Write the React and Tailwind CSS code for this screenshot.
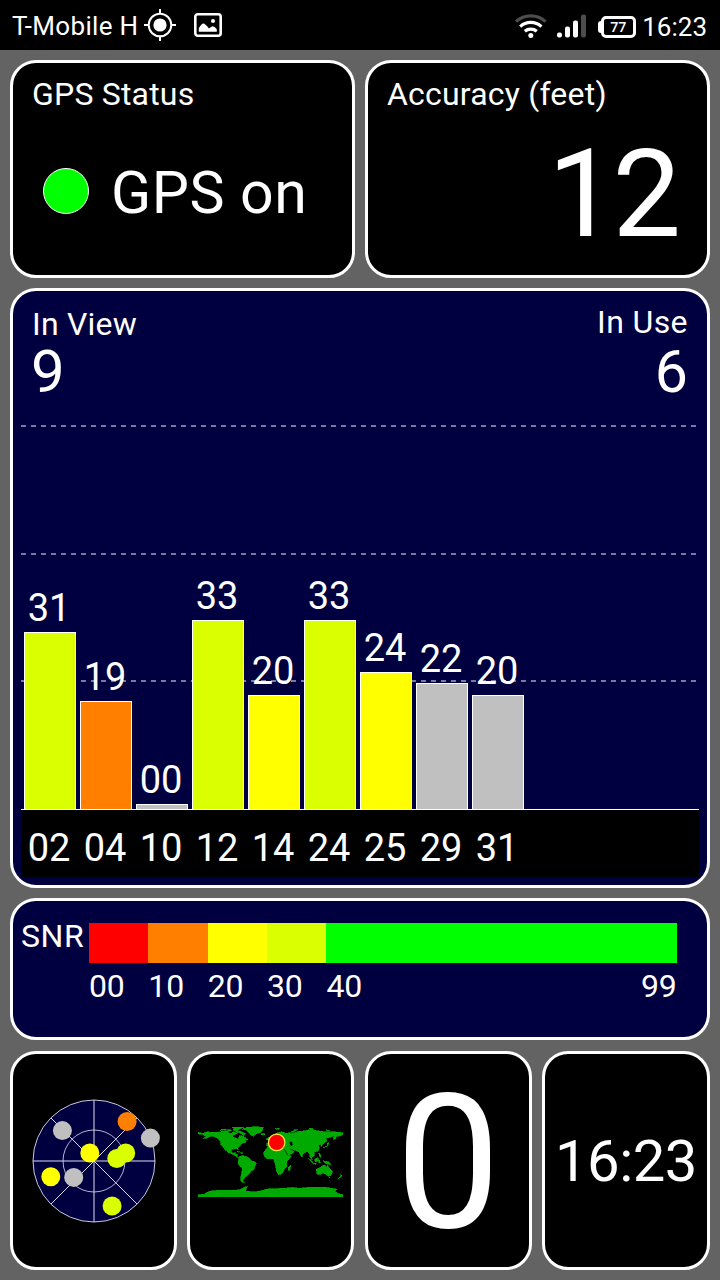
import React from 'react';
import clsx from 'clsx';

const satellites = [
    { id: '02', snr: '31', height: 177, color: 'bg-[#d9ff00]' },
    { id: '04', snr: '19', height: 108, color: 'bg-[#ff8000]' },
    { id: '10', snr: '00', height: 5, color: 'bg-[#c0c0c0]' },
    { id: '12', snr: '33', height: 189, color: 'bg-[#d9ff00]' },
    { id: '14', snr: '20', height: 114, color: 'bg-[#ffff00]' },
    { id: '24', snr: '33', height: 189, color: 'bg-[#d9ff00]' },
    { id: '25', snr: '24', height: 137, color: 'bg-[#ffff00]' },
    { id: '29', snr: '22', height: 126, color: 'bg-[#c0c0c0]' },
    { id: '31', snr: '20', height: 114, color: 'bg-[#c0c0c0]' },
];

const snrScale = [
    { from: '00', span: 10, color: 'bg-[#ff0000]' },
    { from: '10', span: 10, color: 'bg-[#ff8000]' },
    { from: '20', span: 10, color: 'bg-[#ffff00]' },
    { from: '30', span: 10, color: 'bg-[#d9ff00]' },
    { from: '40', to: '99', span: 59, color: 'bg-[#00ff00]' },
];

// Offsets from the centre of the sky plot
const skyDots = [
    { x: 33.1, y: -39.5, fill: '#ff8000' },
    { x: 56.4, y: -22.9, fill: '#c0c0c0' },
    { x: 31.7, y: -8, fill: '#d9ff00' },
    { x: 22.8, y: -2.5, fill: '#d9ff00' },
    { x: -4.2, y: -8, fill: '#ffff00' },
    { x: -31.6, y: -30.4, fill: '#c0c0c0' },
    { x: -43.2, y: 15.7, fill: '#ffff00' },
    { x: -20.3, y: 16.4, fill: '#c0c0c0' },
    { x: 18.1, y: 45, fill: '#d9ff00' },
];

// Longitude / negated latitude
const land = [
    // North and Central America
    '-168,-66 -162,-70 -156,-71 -141,-70 -128,-70 -115,-69 -108,-68 -96,-68 -94,-72 -86,-68 -81,-69 -84,-66 -94,-61 -94,-58 -83,-55 -80,-52 -79,-55 -77,-62 -70,-61 -65,-59 -62,-56 -56,-52 -65,-49 -60,-46 -70,-43 -75,-38 -81,-31 -80,-26 -83,-29 -90,-29 -97,-27 -97,-21 -91,-18 -87,-21 -88,-16 -83,-15 -83,-10 -78,-8 -83,-8 -88,-13 -95,-16 -105,-20 -110,-26 -114,-31 -110,-23 -118,-34 -124,-40 -124,-48 -133,-56 -141,-60 -150,-60 -158,-56 -168,-54 -158,-59 -165,-62',
    '-180,-70 -171,-68 -166,-66 -172,-65 -180,-66',
    // Canadian Arctic
    '-125,-74 -115,-73 -105,-73 -105,-69 -117,-69',
    '-122,-77 -110,-77 -98,-76 -98,-74 -112,-75',
    '-95,-82 -80,-83 -65,-83 -75,-79 -80,-76 -90,-78',
    '-90,-74 -80,-74 -70,-71 -62,-66 -66,-62 -72,-65 -74,-68 -84,-71',
    '-94,-77 -80,-77 -80,-75 -92,-75',
    // Greenland
    '-72,-78 -60,-82 -35,-84 -18,-82 -20,-76 -23,-71 -35,-66 -43,-60 -50,-64 -54,-70 -60,-76',
    '-24,-66 -14,-66 -15,-64 -22,-63',
    // Caribbean
    '-84,-23 -76,-21 -77,-20 -82,-22',
    '-74,-20 -68,-19 -72,-17',
    // South America
    '-78,-8 -72,-12 -62,-10 -52,-5 -49,0 -40,3 -35,6 -39,14 -41,22 -48,26 -54,34 -58,38 -63,41 -66,45 -69,51 -65,55 -74,52 -74,42 -71,30 -70,19 -76,14 -81,6 -80,0',
    // Europe and Asia
    '-9,-43 -1,-44 -4,-48 4,-52 9,-57 13,-54 22,-55 24,-60 18,-60 20,-65 14,-57 6,-58 6,-62 15,-68 27,-71 41,-67 44,-69 60,-69 68,-72 80,-73 104,-78 113,-74 130,-72 150,-72 170,-70 180,-69 180,-65 172,-61 163,-60 162,-54 157,-51 156,-58 162,-62 152,-59 136,-55 141,-50 133,-43 128,-40 129,-35 126,-35 125,-40 118,-38 122,-31 117,-23 108,-21 109,-12 105,-9 100,-13 104,-1 98,-9 97,-16 91,-22 86,-20 80,-15 78,-8 73,-17 70,-22 62,-25 56,-27 50,-30 56,-24 59,-22 52,-16 44,-13 38,-22 34,-30 36,-36 27,-37 26,-40 22,-37 19,-42 13,-45 18,-40 15,-38 8,-44 3,-42 -2,-37 -9,-37',
    '-5,-50 1,-52 -3,-58 -6,-57',
    '-10,-52 -6,-52 -6,-55 -9,-55',
    '10,-79 22,-80 20,-77',
    '52,-71 60,-76 68,-77 58,-72',
    '95,-80 105,-79 98,-78',
    '138,-76 148,-75 140,-74',
    '130,-31 135,-34 141,-36 141,-43 145,-44 142,-38 138,-35',
    // Africa
    '-6,-36 10,-37 11,-33 20,-31 33,-31 37,-22 43,-12 51,-12 47,-4 40,3 40,15 35,20 33,26 27,34 19,35 14,23 13,12 9,1 8,-4 -8,-4 -15,-11 -17,-15 -16,-22 -10,-29',
    '49,12 50,16 47,25 44,24 44,17',
    // Indonesia and Philippines
    '95,-5 104,2 106,6 102,4',
    '105,6 115,8 114,9 106,8',
    '109,-2 116,-7 119,-5 117,1 115,4 110,2',
    '119,0 124,-1 121,1 123,5 120,5',
    '131,1 138,2 145,4 150,10 143,9 138,8',
    '120,-18 122,-18 126,-8 123,-8 121,-13',
    // Australia and New Zealand
    '114,22 122,18 130,12 136,12 137,16 141,16 142,11 146,19 153,26 153,31 150,37 143,39 138,35 131,31 123,34 115,34',
    '145,41 148,41 147,43',
    '173,35 178,38 175,41 172,43 167,46 171,42 175,40',
    // Antarctica
    '-180,85 -165,84 -155,78 -150,76 -130,74 -100,74 -78,73 -65,67 -58,64 -60,70 -62,76 -40,78 -22,75 -10,71 10,70 35,69 55,67 70,69 90,67 120,67 140,67 165,71 160,77 168,82 180,85 180,90 -180,90',
];

const Panel = ({ className, children }) => (
    <div className={clsx('rounded-[26px] border-[3px] border-white', className)}>
        {children}
    </div>
);

const StatusBar = () => (
    <div className="flex h-[50px] items-center bg-black">
        <span className="ml-3 mt-[2px] w-[131px] whitespace-nowrap text-[26px] leading-none tracking-[0.3px]">T-Mobile H</span>
        <svg className="h-[34px] w-[34px]" viewBox="0 0 34 34" fill="none" stroke="#fff" strokeWidth="2">
            <circle cx="17" cy="17" r="11.3" />
            <circle cx="17" cy="17" r="6.6" fill="#fff" stroke="none" />
            <path d="M17 1v5M17 28v5M1 17h5M28 17h5" />
        </svg>
        <svg className="ml-[17px] h-6 w-7" viewBox="0 0 28 24" fill="none">
            <rect x="1.3" y="1.3" width="25.4" height="21.4" rx="2.5" stroke="#fff" strokeWidth="2.6" />
            <path d="M4.8 18.8v-3.6q2.6-4.6 4.6-4.8q1.6 0 5.6 5q2.2-2 3.6-2.2q2 .2 4.200 3v2.600z" fill="#fff" />
            <circle cx="19" cy="8" r="2" fill="#fff" />
        </svg>
        <div className="ml-auto mt-[2px] flex items-center">
            <svg className="h-[26px] w-8" viewBox="0 0 32 26" fill="none" strokeWidth="3.2">
                <path d="M1 8.6a22 22 0 0 1 29.6 0" stroke="#4d4d4d" />
                <path d="M5.2 13.6a15.5 15.5 0 0 1 21.2 0" stroke="#fff" />
                <path d="M9.8 18.2a9.5 9.5 0 0 1 12 0" stroke="#fff" />
                <circle cx="15.8" cy="22.4" r="2.5" fill="#fff" />
            </svg>
            <svg className="ml-[10px] h-6 w-[30px]" viewBox="0 0 30 24" fill="#fff">
                <rect x="0" y="18.5" width="5" height="5" rx="2" />
                <rect x="8" y="12.5" width="5" height="11" rx="2" />
                <rect x="16" y="6.5" width="5" height="17" rx="2" />
                <rect x="24" y="0.5" width="5" height="23" rx="2" fill="#4d4d4d" />
            </svg>
            <div className="ml-[11px] mt-px flex items-center">
                <div className="h-3 w-[3px] rounded-l-sm bg-white" />
                <div className="flex h-[22px] w-[35px] items-center justify-center rounded-[5px] border-[3px] border-white pr-px font-['Open_Sans',sans-serif] text-[14px] font-semibold leading-none">
                    77
                </div>
            </div>
            <span className="ml-[6px] mr-[13px] mt-[2px] text-[26px] leading-none">16:23</span>
        </div>
    </div>
);

const SkyPlot = () => (
    <svg className="h-[126px] w-[138px]" viewBox="-69 -63 138 126">
        <circle r="61" fill="#000040" stroke="#c8c8dc" strokeWidth="1" />
        <circle r="31" fill="none" stroke="#b4b4d0" strokeWidth="1" />
        <path d="M0-61V61M-61 0H61M-43-43L43 43M-43 43L43-43" stroke="#dcdcf0" strokeWidth="1" />
        {skyDots.map((dot, i) => (
            <circle key={i} cx={dot.x} cy={dot.y} r="9.5" fill={dot.fill} />
        ))}
    </svg>
);

const WorldMap = () => (
    <svg className="-mt-px h-[73px] w-[145px]" viewBox="-180 -90 360 180">
        <g fill="#00aa00" stroke="#00aa00" strokeWidth="1.6" shapeRendering="crispEdges">
            {land.map((points, i) => (
                <polygon key={i} points={points} />
            ))}
        </g>
        {/* Caspian, Red Sea and Persian Gulf */}
        <path d="M48-46l5 0 1 8-4 0zM34-28l9 15M49-29l6 4" fill="#000" stroke="#000" strokeWidth="1.5" />
        <circle cx="15.3" cy="-45" r="20.5" fill="#ff0000" stroke="#ffe640" strokeWidth="3" />
    </svg>
);

export default function App() {
    return (
        <div className="flex h-[1280px] w-[720px] flex-col bg-[#636363] font-[Roboto,sans-serif] text-white">
            <StatusBar />

            <div className="flex flex-1 flex-col p-[10px]">
                <div className="grid h-[218px] shrink-0 grid-cols-2 gap-[10px]">
                    <Panel className="bg-black pl-[19px] pt-[15px]">
                        <p className="text-[32px] leading-none tracking-[0.2px]">GPS Status</p>
                        <div className="mt-[53px] flex items-center">
                            <div className="-mt-[5px] ml-[11px] h-[46px] w-[46px] rounded-full border-[1.5px] border-white bg-[#00ff00]" />
                            <span className="ml-[22px] text-[59px] leading-[60px] tracking-[0.5px]">GPS on</span>
                        </div>
                    </Panel>
                    <Panel className="bg-black pl-[19px] pt-[15px]">
                        <p className="text-[32px] leading-none tracking-[0.2px]">Accuracy (feet)</p>
                        <p className="mr-[26px] mt-[23px] text-right text-[122px] leading-[124px] tracking-[-4px]">
                            1<span className="tracking-normal">2</span>
                        </p>
                    </Panel>
                </div>

                <Panel className="relative mt-[10px] h-[600px] shrink-0 overflow-hidden bg-[#000040] px-2">
                    <div className="flex justify-between px-[11px]">
                        <div className="pt-[17px]">
                            <p className="text-[32px] leading-none tracking-[0.2px]">In View</p>
                            <p className="-ml-px mt-[2px] text-[60px] leading-none">9</p>
                        </div>
                        <div className="pt-[15px] text-right">
                            <p className="text-[32px] leading-none tracking-[0.4px]">In Use</p>
                            <p className="mt-1 text-[59px] leading-[60px]">6</p>
                        </div>
                    </div>

                    {/* Grid lines behind the bars */}
                    <div className="absolute left-2 right-[10px] top-[134px] flex flex-col gap-[125.5px]">
                        {[0, 1, 2].map((line) => (
                            <div
                                key={line}
                                className="h-[2px] bg-[repeating-linear-gradient(90deg,#7878a0_0_5px,transparent_5px_10px)]"
                            />
                        ))}
                    </div>

                    <div className="relative mt-[112px] flex h-[296px] items-end gap-1 border-b border-white pl-[3px]">
                        {satellites.map((sat) => (
                            <div key={sat.id} className="w-[52px]">
                                <p className="mb-[5px] pr-[2px] text-center text-[38px] leading-none">{sat.snr}</p>
                                <div
                                    className={clsx('border-x border-t border-white', sat.color)}
                                    style={{ height: sat.height }}
                                />
                            </div>
                        ))}
                    </div>
                    <div className="flex h-[67px] gap-1 bg-black pl-[3px] pt-[19px]">
                        {satellites.map((sat) => (
                            <span key={sat.id} className="w-[52px] pr-[2px] text-center text-[38px] leading-none">
                                {sat.id}
                            </span>
                        ))}
                    </div>
                </Panel>

                <Panel className="mt-[10px] flex h-[142px] shrink-0 bg-[#000040] pl-2 pt-[19px]">
                    <span className="w-[68px] text-[32px] leading-none tracking-[0.6px]">SNR</span>
                    <div className="mt-[3px] flex h-10 w-[587.5px]">
                        {snrScale.map((step) => (
                            <div key={step.from} className="basis-0" style={{ flexGrow: step.span }}>
                                <div className={clsx('h-10', step.color)} />
                                <div className="mt-[7px] flex justify-between text-[32px] leading-none tracking-[-0.2px]">
                                    <span>{step.from}</span>
                                    {step.to && <span>{step.to}</span>}
                                </div>
                            </div>
                        ))}
                    </div>
                </Panel>

                <div className="mt-[11px] grid h-[219px] shrink-0 grid-cols-[167px_167px_167px_168px] justify-between">
                    <Panel className="flex items-center justify-center bg-black">
                        <SkyPlot />
                    </Panel>
                    <Panel className="flex items-center justify-center bg-black">
                        <WorldMap />
                    </Panel>
                    <Panel className="flex items-center justify-center bg-black pt-[6px]">
                        <span className="text-[187px] leading-none">0</span>
                    </Panel>
                    <Panel className="flex items-center justify-center bg-black">
                        <span className="text-[58px] leading-none tracking-[-0.5px]">16:23</span>
                    </Panel>
                </div>
            </div>
        </div>
    );
}
